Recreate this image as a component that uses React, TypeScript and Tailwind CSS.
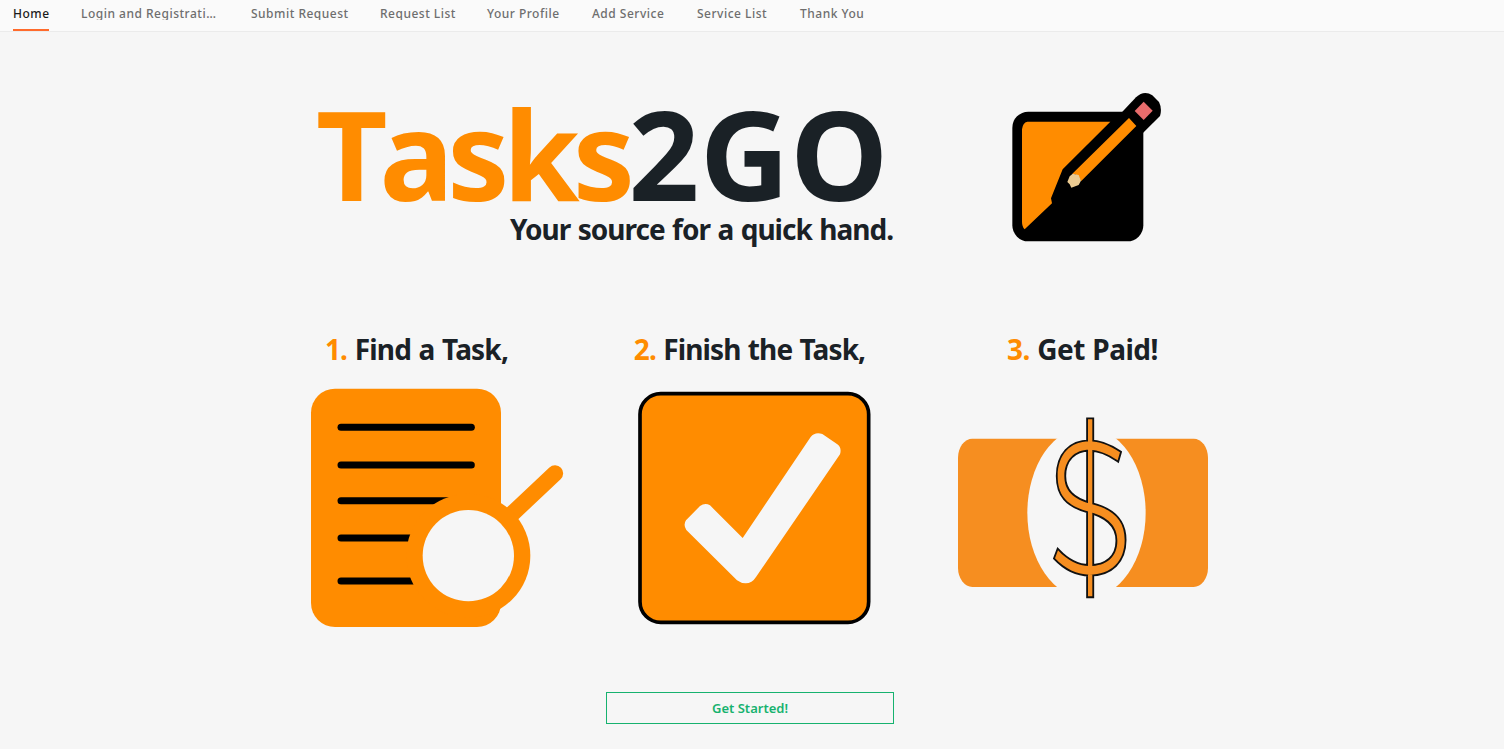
import { ReactNode } from "react";

const navItems = [
  { label: "Home", width: "w-9", active: true },
  { label: "Login and Registrati…", width: "w-[138px]" },
  { label: "Submit Request", width: "w-[97px]" },
  { label: "Request List", width: "w-[75px]" },
  { label: "Your Profile", width: "w-[73px]" },
  { label: "Add Service", width: "w-[73px]" },
  { label: "Service List", width: "w-[71px]" },
  { label: "Thank You", width: "w-16" },
];

function NavBar() {
  return (
    <nav className="flex h-8 gap-8 border-b border-[#ebebeb] bg-[#fafafa] pl-[13px]">
      {navItems.map((item) => (
        <a
          key={item.label}
          href="#"
          className={`${item.width} flex shrink-0 flex-col justify-between whitespace-nowrap text-[12px] font-medium ${
            item.active ? "text-[#1a1a1a]" : "text-[#6e6e6e]"
          }`}
        >
          <span className="mt-1.5 h-3.5 leading-4 tracking-[0.5px] [overflow-y:clip]">{item.label}</span>
          {item.active && <span className="h-0.5 bg-[#ff6b2c]" />}
        </a>
      ))}
    </nav>
  );
}

function NoteIcon() {
  return (
    <svg className="h-[150px] w-[150px]" viewBox="36 36 450 450">
      <rect x="37" y="95" width="393" height="389" rx="48" />
      <path d="M360 103 L408 52 Q432 29 457 46 L477 66 Q487 86 480 108 L425 163 Z" />
      <path
        fill="#ff8c00"
        d="M82 125 L331 125 L188 268 Q169 315 153 355 L156 370 L74 448 Q66 440 66 425 V148 Q68 128 82 125 Z"
      />
      <path fill="#ff8c00" d="M387 114 L409 138 L243 304 Q238 284 217 281 Z" />
      <path fill="#ebcb92" d="M209 289 L218 281 L236 285 L243 302 L236 315 L214 323 L209 313 L202 306 Z" />
      <path fill="#e86c6c" d="M431 65 L458 92 L431 120 L404 93 Z" />
    </svg>
  );
}

function FindIcon() {
  return (
    <svg className="h-60 w-[254px]" viewBox="30 204 762 720">
      <rect x="33" y="206" width="570" height="715" rx="72" fill="#ff8c00" />
      <g stroke="#000" strokeWidth="21" strokeLinecap="round">
        <path d="M123 322 H514" />
        <path d="M123 435 H514" />
        <path d="M123 542 H514" />
        <path d="M123 654 H514" />
        <path d="M123 783 H514" />
      </g>
      <path d="M610 606 L765 460" stroke="#ff8c00" strokeWidth="49" strokeLinecap="round" />
      <circle cx="505" cy="707" r="186" fill="#ff8c00" />
      <circle cx="505" cy="707" r="137" fill="#f6f6f6" />
    </svg>
  );
}

function FinishIcon() {
  return (
    <svg className="h-[234px] w-[234px]" viewBox="111 212 702 702">
      <rect x="120" y="220" width="686" height="686" rx="62" fill="#ff8c00" stroke="#000" strokeWidth="11" />
      <path
        fill="#f6f6f6"
        d="M300 557 Q315 546 330 555 L428 653 L632 350 Q645 334 667 341 L712 372 Q726 382 720 402 L468 770 Q456 789 437 789 Q423 789 411 780 L259 629 Q249 613 258 600 Z"
      />
    </svg>
  );
}

const dollar =
  "M540 397 C508 375 475 364 448 364 C390 364 353 405 353 468 C353 527 381 556 442 574 C506 590 532 620 532 662 C532 710 500 738 448 738 C415 738 383 722 354 691 L345 715 C375 747 412 764 448 764 C514 764 554 724 554 660 C554 602 521 569 457 553 C397 538 373 510 373 468 C373 420 403 389 448 389 C474 389 506 402 533 421 Z M444 298 V829 H457 V298 Z";

function PaidIcon() {
  return (
    <svg className="h-[182px] w-[252px]" viewBox="51 291 756 546">
      <rect x="54" y="356" width="750" height="445" rx="43" ry="58" fill="#f68e20" />
      <ellipse cx="439.5" cy="578" rx="177.5" ry="257" fill="#f6f6f6" />
      {/* outline first, then the fill on top so the bar and the S read as one shape */}
      <path d={dollar} stroke="#111" strokeWidth="11" />
      <path d={dollar} fill="#f68e20" />
    </svg>
  );
}

type StepProps = { num: number; title: string; spacing: string; pad: string; children: ReactNode };

function Step({ num, title, spacing, pad, children }: StepProps) {
  return (
    <div className="flex w-[333px] flex-col items-center">
      <h2 className={`whitespace-nowrap text-[28px] font-bold leading-10 ${spacing}`}>
        <span className="text-[#ff8c00]">{num}.</span> {title}
      </h2>
      <div className={`flex h-[278px] items-center ${pad}`}>{children}</div>
    </div>
  );
}

export default function App() {
  return (
    <div className="min-h-[749px] bg-[#f6f6f6] font-['Noto_Sans','Open_Sans',sans-serif] text-[#1a2126]">
      <NavBar />
      <main className="mx-auto flex w-[1004px] flex-col">
        <header className="flex h-[297px] justify-between pl-[66px] pr-[92px] pt-[60px]">
          <div className="w-[577px]">
            <h1 className="whitespace-nowrap text-[124px] font-bold leading-[121px]">
              <span className="tracking-[-6.7px] text-[#ff8c00]">
                <span className="tracking-[-8px]">T</span>asks
              </span>
              <span className="tracking-[0.5px]">2GO</span>
            </h1>
            <p className="whitespace-nowrap text-right text-[28px] font-bold leading-8 tracking-[-1px] [word-spacing:1.2px]">
              Your source for a quick hand.
            </p>
          </div>
          <NoteIcon />
        </header>
        <section className="flex">
          <Step num={1} title="Find a Task," spacing="tracking-[-0.8px] [word-spacing:1px]" pad="pl-10">
            <FindIcon />
          </Step>
          <Step num={2} title="Finish the Task," spacing="tracking-[-0.9px] [word-spacing:1px]" pad="pl-2">
            <FinishIcon />
          </Step>
          <Step num={3} title="Get Paid!" spacing="tracking-[-0.5px] [word-spacing:0.6px]" pad="">
            <PaidIcon />
          </Step>
        </section>
        <button className="ml-[356px] mt-[45px] h-8 w-72 border border-[#16b26f] pt-0.5 text-[13px] font-semibold text-[#16b26f]">
          Get Started!
        </button>
      </main>
    </div>
  );
}
